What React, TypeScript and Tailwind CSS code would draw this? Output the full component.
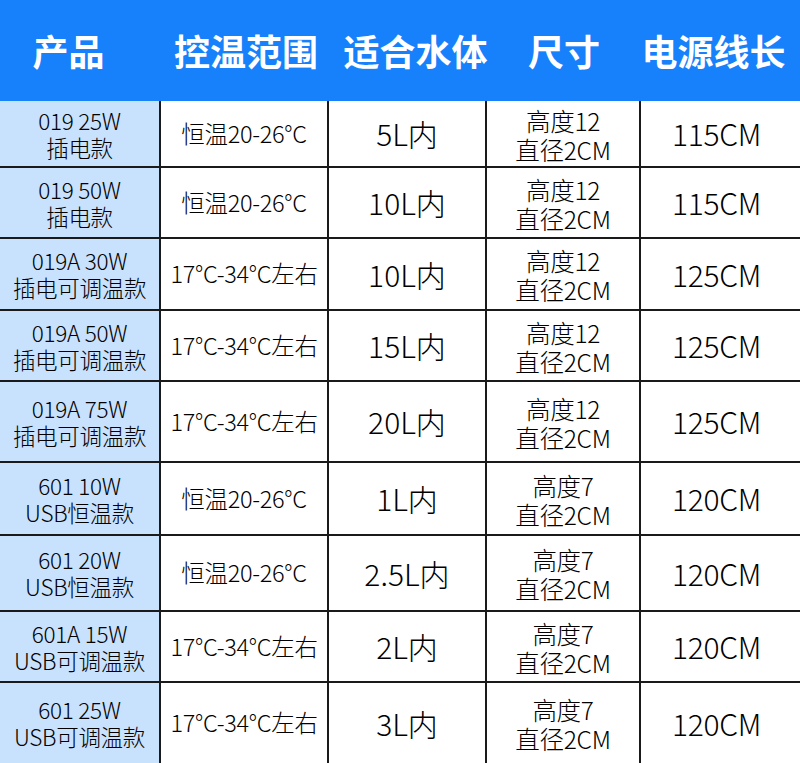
import React from "react";

type Row = { h: number; p1: string; p2: string; range: string; vol: string; s1: string; s2: string; len: string };

const rows: Row[] = [
  { h: 67, p1: "019 25W", p2: "插电款", range: "恒温20-26°C", vol: "5L内", s1: "高度12", s2: "直径2CM", len: "115CM" },
  { h: 71, p1: "019 50W", p2: "插电款", range: "恒温20-26°C", vol: "10L内", s1: "高度12", s2: "直径2CM", len: "115CM" },
  { h: 72, p1: "019A 30W", p2: "插电可调温款", range: "17°C-34°C左右", vol: "10L内", s1: "高度12", s2: "直径2CM", len: "125CM" },
  { h: 71, p1: "019A 50W", p2: "插电可调温款", range: "17°C-34°C左右", vol: "15L内", s1: "高度12", s2: "直径2CM", len: "125CM" },
  { h: 81, p1: "019A 75W", p2: "插电可调温款", range: "17°C-34°C左右", vol: "20L内", s1: "高度12", s2: "直径2CM", len: "125CM" },
  { h: 73, p1: "601 10W", p2: "USB恒温款", range: "恒温20-26°C", vol: "1L内", s1: "高度7", s2: "直径2CM", len: "120CM" },
  { h: 76, p1: "601 20W", p2: "USB恒温款", range: "恒温20-26°C", vol: "2.5L内", s1: "高度7", s2: "直径2CM", len: "120CM" },
  { h: 71, p1: "601A 15W", p2: "USB可调温款", range: "17°C-34°C左右", vol: "2L内", s1: "高度7", s2: "直径2CM", len: "120CM" },
  { h: 80, p1: "601 25W", p2: "USB可调温款", range: "17°C-34°C左右", vol: "3L内", s1: "高度7", s2: "直径2CM", len: "120CM" },
];

export default function App() {
  return (
    <div
      className="w-[800px] h-[763px] bg-white text-black overflow-hidden"
      style={{ fontFamily: '"Noto Sans CJK SC", "Noto Sans", sans-serif' }}
    >
      <div className="h-[101px] bg-[#1780fb] flex items-center text-white font-bold text-[36px] leading-none pb-[2px] whitespace-nowrap">
        <div className="w-[161px] shrink-0 flex justify-center pr-[24px]">产品</div>
        <div className="w-[168px] shrink-0 flex justify-center pl-[2px]">控温范围</div>
        <div className="w-[158px] shrink-0 flex justify-center pl-[15px]">适合水体</div>
        <div className="w-[154px] shrink-0 flex justify-center">尺寸</div>
        <div className="w-[159px] shrink-0 flex justify-center pr-[14px]">电源线长</div>
      </div>
      {rows.map((r, i) => {
        const last = i === rows.length - 1;
        const bb = last ? "" : "border-b-[2px] border-b-[#1a1a1a]";
        return (
          <div key={i} className="flex whitespace-nowrap" style={{ height: r.h }}>
            <div className={`w-[161px] shrink-0 bg-[#c8e1fd] border-r-[2px] border-r-[#1a1a1a] ${bb} flex flex-col items-center justify-center text-[22.5px] leading-[27px] font-light tracking-[-0.3px]`}>
              <div>{r.p1}</div>
              <div>{r.p2}</div>
            </div>
            <div className={`w-[168px] shrink-0 border-r-[2px] border-r-[#1a1a1a] ${bb} flex items-center justify-center text-[23.5px] font-light tracking-[-0.3px]`}>
              {r.range}
            </div>
            <div className={`w-[158px] shrink-0 border-r-[2px] border-r-[#1a1a1a] ${bb} flex items-center justify-center text-[30px] font-light`}>
              {r.vol}
            </div>
            <div className={`w-[154px] shrink-0 border-r-[2px] border-r-[#1a1a1a] ${bb} flex flex-col items-center justify-center text-[24.5px] leading-[29px] font-light tracking-[-0.3px] pt-[2px]`}>
              <div>{r.s1}</div>
              <div>{r.s2}</div>
            </div>
            <div className={`w-[159px] shrink-0 ${bb} flex items-center justify-center text-[30px] font-light pr-[8px] tracking-[-0.3px]`}>
              {r.len}
            </div>
          </div>
        );
      })}
    </div>
  );
}
